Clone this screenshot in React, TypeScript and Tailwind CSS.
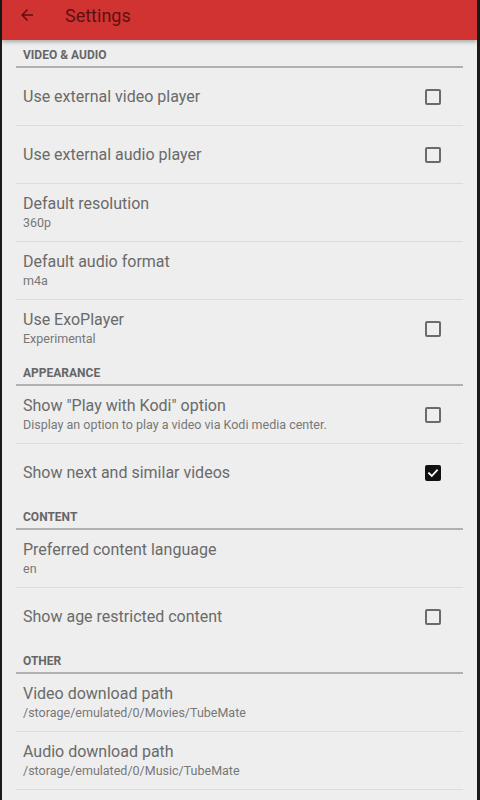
import React from "react";

type Row = { title: string; sub?: string; check?: "off" | "on"; last?: boolean };
type Section = { name: string; rows: Row[] };

const sections: Section[] = [
  {
    name: "VIDEO & AUDIO",
    rows: [
      { title: "Use external video player", check: "off" },
      { title: "Use external audio player", check: "off" },
      { title: "Default resolution", sub: "360p" },
      { title: "Default audio format", sub: "m4a" },
      { title: "Use ExoPlayer", sub: "Experimental", check: "off", last: true },
    ],
  },
  {
    name: "APPEARANCE",
    rows: [
      { title: 'Show "Play with Kodi" option', sub: "Display an option to play a video via Kodi media center.", check: "off" },
      { title: "Show next and similar videos", check: "on", last: true },
    ],
  },
  {
    name: "CONTENT",
    rows: [
      { title: "Preferred content language", sub: "en" },
      { title: "Show age restricted content", check: "off", last: true },
    ],
  },
  {
    name: "OTHER",
    rows: [
      { title: "Video download path", sub: "/storage/emulated/0/Movies/TubeMate" },
      { title: "Audio download path", sub: "/storage/emulated/0/Music/TubeMate" },
      {
        title: "Autoplay when called from another app",
        sub: "Automatically play a video when called from another app",
        check: "off",
        last: true,
      },
    ],
  },
];

function Checkbox({ on }: { on: boolean }) {
  if (on) {
    return (
      <div className="w-[16px] h-[16px] rounded-[2px] bg-[#111] flex items-center justify-center">
        <svg width="12" height="12" viewBox="0 0 12 12">
          <path d="M2 6.2 L4.8 9 L10 3.2" fill="none" stroke="#fff" strokeWidth="1.8" strokeLinecap="square" />
        </svg>
      </div>
    );
  }
  return <div className="w-[16px] h-[16px] rounded-[2px] border-2 border-[#6a6a6a]" />;
}

export default function App() {
  return (
    <div
      className="w-[480px] h-[800px] overflow-hidden bg-[#1a1a1a] flex"
      style={{ fontFamily: "Roboto, 'Noto Sans', sans-serif" }}
    >
      <div className="ml-[2px] w-[475px] h-full bg-[#eeeeee] flex flex-col">
        <div className="h-[40px] shrink-0 bg-[#d13232] flex items-start pt-[5px] shadow-[0_2px_4px_rgba(0,0,0,0.3)] relative z-10">
          <div className="w-[63px] flex pl-[16px] pt-[1px]">
            <svg width="18" height="18" viewBox="0 0 24 24">
              <path d="M20 11H7.83l5.59-5.59L12 4l-8 8 8 8 1.41-1.41L7.83 13H20v-2z" fill="#5e1111" />
            </svg>
          </div>
          <span className="text-[18px] leading-[22px] text-[#5e1111]">Settings</span>
        </div>
        <div className="flex flex-col">
          {sections.map((s) => (
            <div key={s.name} className="flex flex-col">
              <div className="h-[28px] mx-[14px] border-b-2 border-[#b0b0b0] flex items-end pb-[4px] px-[7px]">
                <span className="text-[12px] leading-[14px] font-bold text-[#666]">{s.name}</span>
              </div>
              {s.rows.map((r) => (
                <div
                  key={r.title}
                  className={
                    "h-[58px] mx-[14px] flex items-center px-[7px] " +
                    (r.last ? "" : "border-b border-[#dcdcdc]")
                  }
                >
                  <div className="flex-1 flex flex-col">
                    <span className="text-[16px] leading-[20px] text-[#6a6a6a]">{r.title}</span>
                    {r.sub && <span className="text-[12.5px] leading-[18px] text-[#777]">{r.sub}</span>}
                  </div>
                  {r.check && (
                    <div className="w-[30px] flex justify-end mr-[15px]">
                      <Checkbox on={r.check === "on"} />
                    </div>
                  )}
                </div>
              ))}
            </div>
          ))}
        </div>
      </div>
    </div>
  );
}
